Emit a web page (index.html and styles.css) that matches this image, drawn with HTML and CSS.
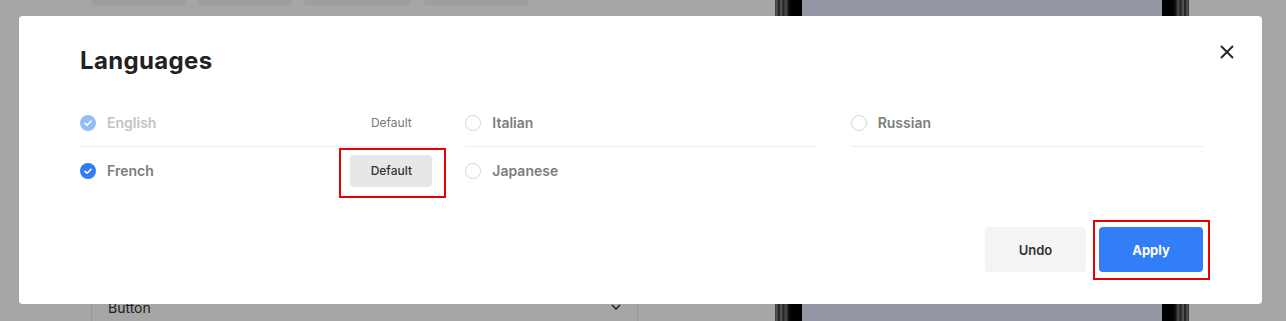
FILE: index.html
```html
<!DOCTYPE html>
<html lang="en">
    <head>
        <meta charset="UTF-8" />
        <meta name="viewport" content="width=device-width, initial-scale=1.0" />
        <title>Languages</title>
        <link rel="stylesheet" href="styles.css">
    </head>

    <body>
        <div class="page">
            <div class="editor">
                <div class="tabs">
                    <div class="tab"></div>
                    <div class="tab"></div>
                    <div class="tab"></div>
                    <div class="tab"></div>
                </div>
                <div class="field">
                    <span>Button</span>
                    <svg class="chevron" width="10" height="6" viewBox="0 0 10 6">
                        <polyline points="1,1 5,5 9,1" fill="none" stroke="#333" stroke-width="1.5" />
                    </svg>
                </div>
            </div>
            <div class="phone">
                <div class="bezel"></div>
                <div class="screen"></div>
                <div class="bezel"></div>
            </div>
        </div>

        <div class="overlay">
            <div class="modal">
                <h1 class="title">Languages</h1>
                <button class="close" aria-label="Close">
                    <svg width="14" height="14" viewBox="0 0 14 14">
                        <path d="M1 1 L13 13 M13 1 L1 13" stroke="#2b2b2b" stroke-width="2" />
                    </svg>
                </button>

                <div class="langs">
                    <div class="lang">
                        <span class="radio checked faded">
                            <svg width="16" height="16" viewBox="0 0 16 16"><polyline points="5,8.3 7.1,10.2 11,6.2" fill="none" stroke="#fff" stroke-width="1.6" stroke-linecap="round" stroke-linejoin="round" /></svg>
                        </span>
                        <span class="name muted">English</span>
                        <button class="default plain">Default</button>
                    </div>
                    <div class="lang">
                        <span class="radio"></span>
                        <span class="name">Italian</span>
                    </div>
                    <div class="lang">
                        <span class="radio"></span>
                        <span class="name">Russian</span>
                    </div>
                    <div class="lang">
                        <span class="radio checked">
                            <svg width="16" height="16" viewBox="0 0 16 16"><polyline points="5,8.3 7.1,10.2 11,6.2" fill="none" stroke="#fff" stroke-width="1.6" stroke-linecap="round" stroke-linejoin="round" /></svg>
                        </span>
                        <span class="name">French</span>
                        <button class="default">Default<span class="mark mark-default"></span></button>
                    </div>
                    <div class="lang">
                        <span class="radio"></span>
                        <span class="name">Japanese</span>
                    </div>
                    <div class="lang"></div>
                </div>

                <div class="actions">
                    <button class="btn undo">Undo</button>
                    <button class="btn apply">Apply<span class="mark mark-apply"></span></button>
                </div>
            </div>
        </div>
    </body>
</html>
```

FILE: styles.css
```css
body {
    margin: 0;
    height: 321px;
    overflow: hidden;
    background-color: #fff;
    font-family: Inter, "Liberation Sans", sans-serif;
}
.page {
    display: flex;
    height: 321px;
}
.editor {
    width: 547px;
    padding-left: 91px;
    display: flex;
    flex-direction: column;
}
.tabs {
    display: flex;
    gap: 12px;
}
.tab {
    height: 6px;
    background-color: #f4f4f4;
    border-radius: 0 0 4px 4px;
}
.tab:nth-child(1) {
    width: 95px;
}
.tab:nth-child(2) {
    width: 94px;
}
.tab:nth-child(3) {
    width: 107px;
}
.tab:nth-child(4) {
    width: 105px;
    margin-left: 1px;
}
.field {
    margin-top: auto;
    margin-bottom: -6px;
    height: 40px;
    box-sizing: border-box;
    border: 1px solid #e8e8e8;
    display: flex;
    align-items: center;
    justify-content: space-between;
    padding: 0 16px;
    font-size: 14px;
    color: #333;
}
.phone {
    margin-left: 137px;
    width: 414px;
    display: flex;
}
.bezel {
    width: 27px;
    background: linear-gradient(90deg, #555 0, #888 2px, #222 4px, #999 6px, #333 8px, #777 11px, #111 14px, #000 18px, #000 27px);
}
.bezel:last-child {
    background: linear-gradient(90deg, #000 0, #000 9px, #111 13px, #777 16px, #333 19px, #999 21px, #222 23px, #888 25px, #555 27px);
}
.screen {
    flex: 1;
    background-color: #e4e8fb;
}

.overlay {
    position: fixed;
    inset: 0;
    background-color: rgba(0, 0, 0, 0.35);
    padding: 16px 24px 0 19px;
}
.modal {
    position: relative;
    background-color: #fff;
    border-radius: 4px;
    padding: 29px 59px 32px 61px;
}
.title {
    margin: 0;
    font-size: 24px;
    line-height: 32px;
    font-weight: 700;
    letter-spacing: 0.35px;
    color: #222;
}
.close {
    position: absolute;
    top: 29px;
    right: 28px;
    width: 14px;
    height: 14px;
    padding: 0;
    border: none;
    background: none;
    display: flex;
}
.langs {
    margin-top: 22px;
    display: grid;
    grid-template-columns: repeat(3, 1fr);
    column-gap: 33px;
}
.lang {
    height: 47px;
    display: flex;
    align-items: center;
}
.lang:nth-child(-n+3) {
    border-bottom: 1px solid #eeeeee;
}
.radio {
    width: 16px;
    height: 16px;
    box-sizing: border-box;
    border-radius: 50%;
    border: 1px solid #d8d8d8;
    margin-right: 11px;
    display: flex;
}
.radio.checked {
    border: none;
    background-color: #2f7cf6;
}
.radio.faded {
    background-color: #95bcf9;
}
.name {
    font-size: 14px;
    font-weight: 600;
    color: #7d7d7d;
}
.name.muted {
    color: #c3c3c3;
}
.default {
    position: relative;
    margin-left: auto;
    width: 82px;
    height: 32px;
    border: none;
    border-radius: 4px;
    background-color: #e7e7e7;
    font-family: inherit;
    font-size: 12px;
    font-weight: 500;
    color: #333;
    padding: 0;
}
.default.plain {
    background: none;
    color: #777;
    font-weight: 400;
}
.actions {
    margin-top: 33px;
    display: flex;
    justify-content: flex-end;
    gap: 13px;
}
.btn {
    position: relative;
    height: 45px;
    border: none;
    border-radius: 4px;
    font-family: inherit;
    font-size: 13px;
    font-weight: 600;
    padding: 0;
}
.undo {
    width: 101px;
    background-color: #f4f4f4;
    color: #333;
}
.apply {
    width: 104px;
    background-color: #327ef6;
    color: #fff;
    font-weight: 700;
}
.mark {
    position: absolute;
    border: 2px solid #e60000;
}
.mark-default {
    top: -7px;
    left: -11px;
    right: -14px;
    bottom: -11px;
}
.mark-apply {
    top: -7px;
    left: -6px;
    right: -7px;
    bottom: -8px;
}
```
